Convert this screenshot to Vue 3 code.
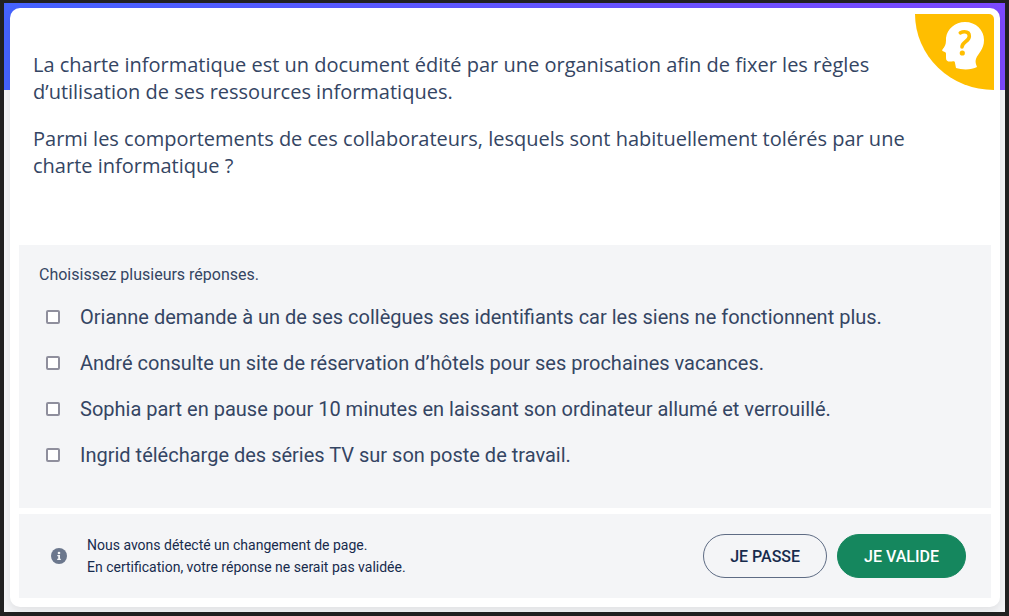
<script setup>
import { ref } from 'vue'

const paragraphs = [
  'La charte informatique est un document édité par une organisation afin de fixer les règles d’utilisation de ses ressources informatiques.',
  'Parmi les comportements de ces collaborateurs, lesquels sont habituellement tolérés par une charte informatique ?',
]

const options = [
  'Orianne demande à un de ses collègues ses identifiants car les siens ne fonctionnent plus.',
  'André consulte un site de réservation d’hôtels pour ses prochaines vacances.',
  'Sophia part en pause pour 10 minutes en laissant son ordinateur allumé et verrouillé.',
  'Ingrid télécharge des séries TV sur son poste de travail.',
]

const selected = ref([])
</script>

<template>
  <div class="frame">
    <main class="card">
      <div class="badge">
        <svg class="head" viewBox="0 0 42 48" aria-hidden="true">
          <path
            fill="#fff"
            d="M23 0C34 0 42 8 42 18C42 28 36 31 34 37C33 40 34 42 35 45C30 48 20 48 14 46L13 41C13 39.500 12 39 10 39.500C6 40 4 39 4 36L4 31.500C4 30 2 30 0.500 29C-0.500 28 1 27 2 25.500C4 22.500 4 20 4 16C5 7 13 0 23 0Z"
          />
          <path
            fill="none"
            stroke="#ffbe00"
            stroke-width="3.6"
            stroke-linecap="round"
            stroke-linejoin="round"
            d="M18.300 10.800C19.500 10.200 21 9.800 22.500 9.800C25.700 9.800 27.300 11.500 27.300 14.200C27.300 19.500 20.200 19.500 20 25"
          />
          <circle cx="20.300" cy="31" r="2.600" fill="#ffbe00" />
        </svg>
      </div>

      <section class="statement">
        <p v-for="text in paragraphs" :key="text">{{ text }}</p>
      </section>

      <fieldset class="panel answers">
        <legend class="hint">Choisissez plusieurs réponses.</legend>
        <label v-for="(option, index) in options" :key="option" class="option">
          <input v-model="selected" type="checkbox" :value="index" />
          <span>{{ option }}</span>
        </label>
      </fieldset>

      <footer class="panel actions">
        <svg class="info" viewBox="0 0 16 16" aria-hidden="true">
          <circle cx="8" cy="8" r="8" fill="#6b778d" />
          <circle cx="8" cy="5" r="1.300" fill="#f4f5f7" />
          <path fill="#f4f5f7" d="M6.300 7H9V10.800H9.800V12H6.200V10.800H7.200V8.200H6.300Z" />
        </svg>
        <p class="notice">
          Nous avons détecté un changement de page.<br />
          En certification, votre réponse ne serait pas validée.
        </p>
        <div class="buttons">
          <button type="button" class="skip">JE PASSE</button>
          <button type="button" class="validate">JE VALIDE</button>
        </div>
      </footer>
    </main>
  </div>
</template>

<style>
body {
  background: #212121;
}
</style>

<style scoped>
.frame {
  box-sizing: border-box;
  min-height: 100vh;
  padding: 5px 5px 5px 6px;
  border: solid #212121;
  border-width: 3px 4px 4px;
  background:
    linear-gradient(90deg, #4563ff, #7c49ff) top / 100% 87px no-repeat,
    #f4f5f7;
  font-family: Roboto, sans-serif;
}

.card {
  position: relative;
  padding: 43px 9px 9px;
  border-radius: 10px;
  background: #fff;
  box-shadow: 0 4px 10px rgba(0, 0, 0, 0.08);
}

.badge {
  position: absolute;
  top: 6px;
  right: 6px;
  display: flex;
  justify-content: flex-end;
  box-sizing: border-box;
  width: 79px;
  height: 76px;
  padding: 8px 10px 0 0;
  border-radius: 0 5px 0 100%;
  background: #ffbe00;
}

.head {
  width: 42px;
  height: 48px;
}

.statement {
  padding: 0 60px 66px 14px;
  color: #344563;
  font: 20px/27px "Open Sans", sans-serif;
}

.statement p {
  margin: 0;
}

.statement p + p {
  margin-top: 20px;
}

.panel {
  margin: 0;
  border: 0;
  background: #f4f5f7;
}

.answers {
  min-width: 0;
  padding: 20px 20px 30px;
  color: #344563;
}

.hint {
  float: left;
  width: 100%;
  margin-bottom: 9px;
  padding: 0;
  font-size: 16px;
  line-height: 20px;
}

.option {
  clear: both;
  display: flex;
  align-items: center;
  gap: 20px;
  min-height: 46px;
  padding-left: 7px;
  font-size: 20px;
  line-height: 26px;
}

.option input {
  flex: none;
  appearance: none;
  width: 14px;
  height: 14px;
  margin: 0;
  border: 2px solid #8f8f9d;
  border-radius: 2px;
  background: #fff;
}

.option input:checked {
  background: #344563;
}

.actions {
  display: flex;
  align-items: center;
  gap: 20px;
  margin-top: 6px;
  padding: 20px 25px 20px 32px;
}

.info {
  flex: none;
  width: 16px;
  height: 16px;
}

.notice {
  flex: 1;
  margin: 0;
  color: #172b4d;
  font-size: 14px;
  line-height: 22px;
}

.buttons {
  display: flex;
  gap: 10px;
}

.buttons button {
  height: 44px;
  padding: 2px 26px 0;
  border: 1px solid #5e6c84;
  border-radius: 22px;
  background: transparent;
  color: #172b4d;
  font: 500 16px/20px Roboto, sans-serif;
  cursor: pointer;
}

.buttons .validate {
  border-color: #15875e;
  background: #15875e;
  color: #fff;
}
</style>
